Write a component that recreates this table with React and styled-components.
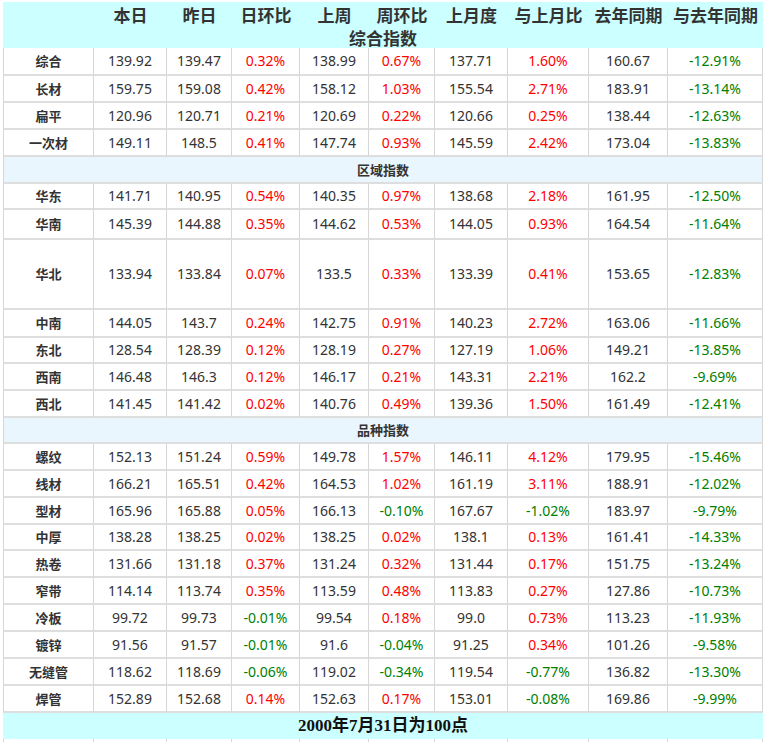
import React from 'react';
import styled, { createGlobalStyle } from 'styled-components';

const GlobalStyle = createGlobalStyle`
  html, body { margin: 0; padding: 0; background: #fff; }
  body { font-family: "Noto Sans", "Noto Sans CJK SC", sans-serif; }
`;

const widths = [91, 73, 65, 68, 69, 66, 73, 81, 79, 95];
const heads = ['', '本日', '昨日', '日环比', '上周', '周环比', '上月度', '与上月比', '去年同期', '与去年同期'];

// row heights that differ from the default 27px
const tall = { 综合: 28, 华东: 26, 华南: 30, 华北: 70, 中南: 28, 东北: 26, 中厚: 26, 品种指数: 26 };

const sections = [
  {
    title: '综合指数',
    rows: [
      ['综合', '139.92', '139.47', '0.32%', '138.99', '0.67%', '137.71', '1.60%', '160.67', '-12.91%'],
      ['长材', '159.75', '159.08', '0.42%', '158.12', '1.03%', '155.54', '2.71%', '183.91', '-13.14%'],
      ['扁平', '120.96', '120.71', '0.21%', '120.69', '0.22%', '120.66', '0.25%', '138.44', '-12.63%'],
      ['一次材', '149.11', '148.5', '0.41%', '147.74', '0.93%', '145.59', '2.42%', '173.04', '-13.83%'],
    ],
  },
  {
    title: '区域指数',
    rows: [
      ['华东', '141.71', '140.95', '0.54%', '140.35', '0.97%', '138.68', '2.18%', '161.95', '-12.50%'],
      ['华南', '145.39', '144.88', '0.35%', '144.62', '0.53%', '144.05', '0.93%', '164.54', '-11.64%'],
      ['华北', '133.94', '133.84', '0.07%', '133.5', '0.33%', '133.39', '0.41%', '153.65', '-12.83%'],
      ['中南', '144.05', '143.7', '0.24%', '142.75', '0.91%', '140.23', '2.72%', '163.06', '-11.66%'],
      ['东北', '128.54', '128.39', '0.12%', '128.19', '0.27%', '127.19', '1.06%', '149.21', '-13.85%'],
      ['西南', '146.48', '146.3', '0.12%', '146.17', '0.21%', '143.31', '2.21%', '162.2', '-9.69%'],
      ['西北', '141.45', '141.42', '0.02%', '140.76', '0.49%', '139.36', '1.50%', '161.49', '-12.41%'],
    ],
  },
  {
    title: '品种指数',
    rows: [
      ['螺纹', '152.13', '151.24', '0.59%', '149.78', '1.57%', '146.11', '4.12%', '179.95', '-15.46%'],
      ['线材', '166.21', '165.51', '0.42%', '164.53', '1.02%', '161.19', '3.11%', '188.91', '-12.02%'],
      ['型材', '165.96', '165.88', '0.05%', '166.13', '-0.10%', '167.67', '-1.02%', '183.97', '-9.79%'],
      ['中厚', '138.28', '138.25', '0.02%', '138.25', '0.02%', '138.1', '0.13%', '161.41', '-14.33%'],
      ['热卷', '131.66', '131.18', '0.37%', '131.24', '0.32%', '131.44', '0.17%', '151.75', '-13.24%'],
      ['窄带', '114.14', '113.74', '0.35%', '113.59', '0.48%', '113.83', '0.27%', '127.86', '-10.73%'],
      ['冷板', '99.72', '99.73', '-0.01%', '99.54', '0.18%', '99.0', '0.73%', '113.23', '-11.93%'],
      ['镀锌', '91.56', '91.57', '-0.01%', '91.6', '-0.04%', '91.25', '0.34%', '101.26', '-9.58%'],
      ['无缝管', '118.62', '118.69', '-0.06%', '119.02', '-0.34%', '119.54', '-0.77%', '136.82', '-13.30%'],
      ['焊管', '152.89', '152.68', '0.14%', '152.63', '0.17%', '153.01', '-0.08%', '169.86', '-9.99%'],
    ],
  },
];

const toneOf = (v) => {
  if (!v.endsWith('%')) return 'plain';
  return v.startsWith('-') ? 'down' : 'up';
};

const tones = { plain: '#333333', up: '#ff0000', down: '#008000' };

function App() {
  const [first, ...rest] = sections;
  return (
    <>
      <GlobalStyle />
      <Table>
        <colgroup>
          {widths.map((w, i) => <col key={i} style={{ width: w }} />)}
        </colgroup>
        <thead>
          <tr>
            {heads.map((h, i) => <HeadCell key={i} $h={25}>{h}</HeadCell>)}
          </tr>
          <tr>
            <HeadCell colSpan={10} $h={21}>{first.title}</HeadCell>
          </tr>
        </thead>
        <tbody>
          {first.rows.map((r) => <DataRow key={r[0]} row={r} />)}
          {rest.map((s) => (
            <React.Fragment key={s.title}>
              <tr>
                <SectionCell colSpan={10} $h={tall[s.title] || 27}>{s.title}</SectionCell>
              </tr>
              {s.rows.map((r) => <DataRow key={r[0]} row={r} />)}
            </React.Fragment>
          ))}
          <tr>
            <FootCell colSpan={10}>2000年7月31日为100点</FootCell>
          </tr>
          <tr>
            {widths.map((w, i) => <Cell key={i} $h={12} $tone="plain" />)}
          </tr>
        </tbody>
      </Table>
    </>
  );
}

function DataRow({ row }) {
  const h = tall[row[0]] || 27;
  return (
    <tr>
      <LabelCell $h={h}>{row[0]}</LabelCell>
      {row.slice(1).map((v, i) => (
        <Cell key={i} $h={h} $tone={toneOf(v)}>{v}</Cell>
      ))}
    </tr>
  );
}

export default App;

const Table = styled.table`
  margin: 2px 0 0 3px;
  width: 760px;
  table-layout: fixed;
  border-collapse: separate;
  border-spacing: 0;
`;

const HeadCell = styled.th`
  box-sizing: border-box;
  height: ${(p) => p.$h}px;
  padding: 0;
  background: #ccffff;
  color: #333;
  font: bold 17px/18px "Noto Sans CJK SC", sans-serif;
  text-align: center;
  vertical-align: middle;
  white-space: nowrap;
`;

const Cell = styled.td`
  box-sizing: border-box;
  height: ${(p) => p.$h}px;
  padding: 0;
  border-right: 1px solid #d6d6d6;
  border-bottom: 2px solid #dedede;
  &:first-child { border-left: 1px solid #d6d6d6; }
  color: ${(p) => tones[p.$tone]};
  font-family: "Noto Sans", "Noto Sans CJK SC", sans-serif;
  font-size: 14px;
  line-height: 18px;
  text-align: center;
  vertical-align: middle;
  white-space: nowrap;
`;

const LabelCell = styled(Cell)`
  color: #333;
  font: bold 13px/18px "Noto Sans CJK SC", sans-serif;
`;

const SectionCell = styled.td`
  box-sizing: border-box;
  height: ${(p) => p.$h}px;
  padding: 0;
  background: #eaf6fe;
  border-left: 1px solid #d6d6d6;
  border-right: 1px solid #d6d6d6;
  border-bottom: 2px solid #dedede;
  color: #333;
  font: bold 13px/18px "Noto Sans CJK SC", sans-serif;
  text-align: center;
  vertical-align: middle;
`;

const FootCell = styled.td`
  box-sizing: border-box;
  height: 26px;
  padding: 0;
  background: #ccffff;
  color: #111;
  font: bold 17px/18px "Liberation Serif", "Noto Sans CJK SC", serif;
  text-align: center;
  vertical-align: middle;
`;
